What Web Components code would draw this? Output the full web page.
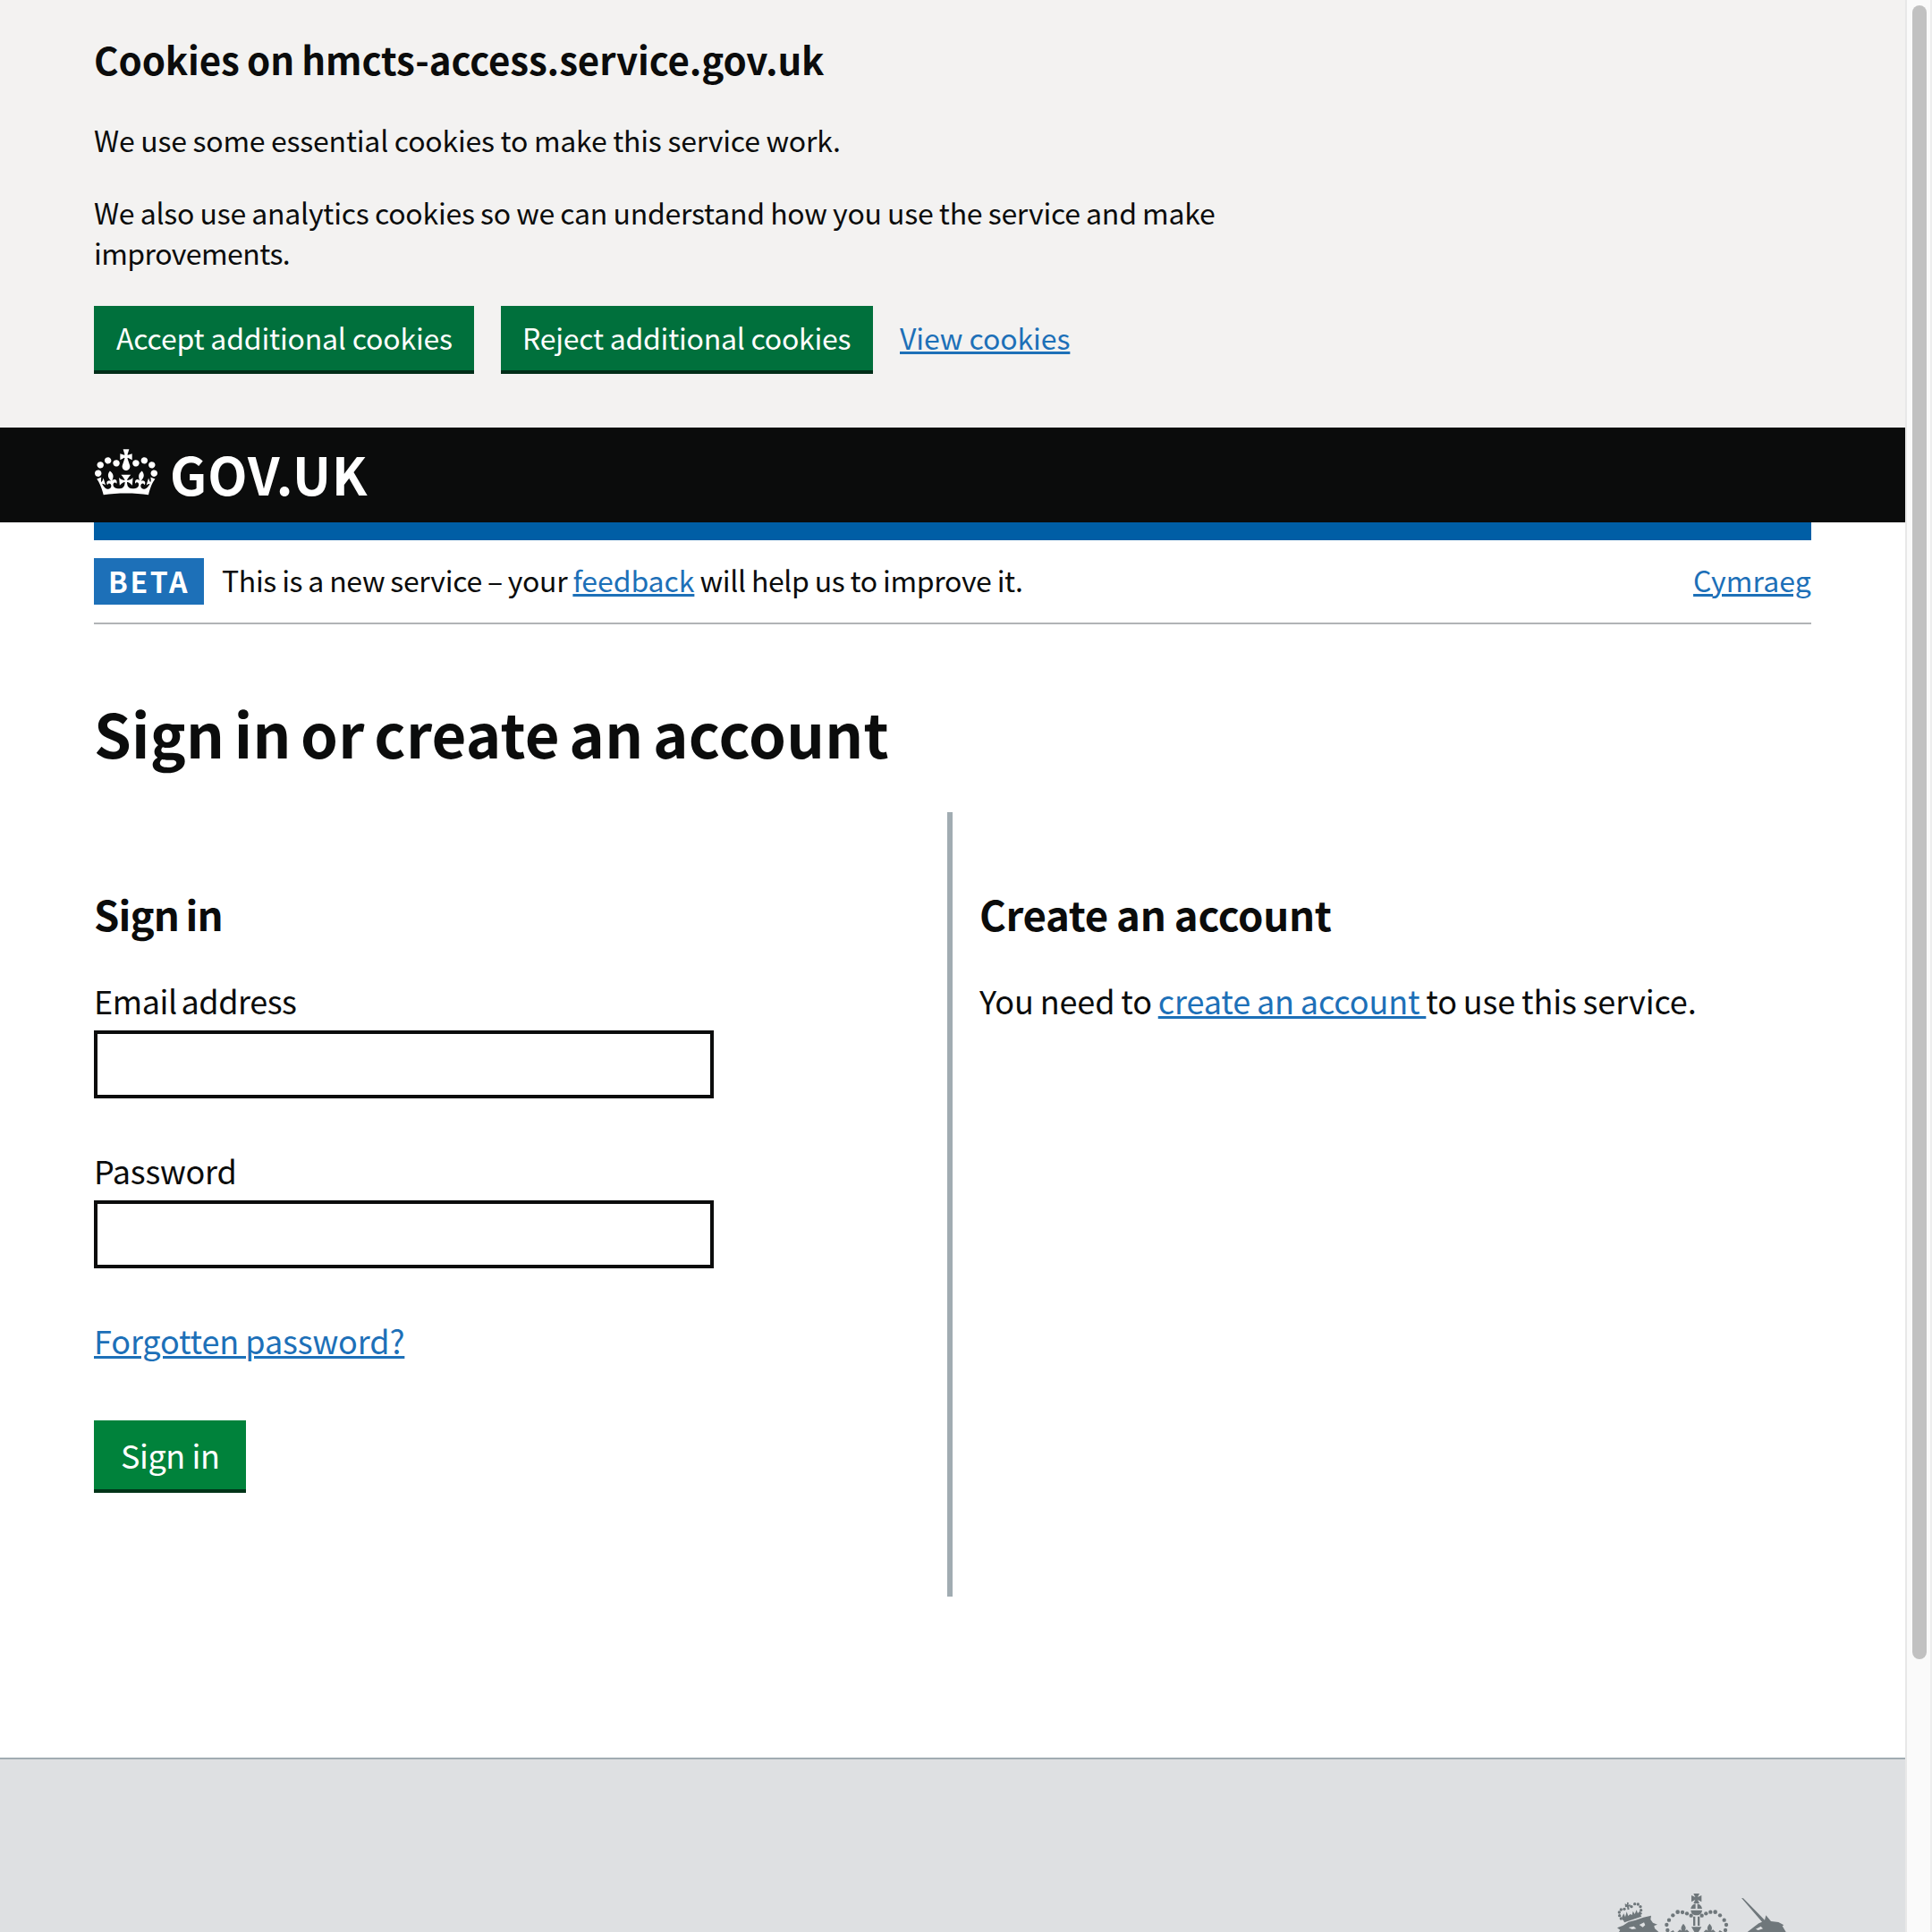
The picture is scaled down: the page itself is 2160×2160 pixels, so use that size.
<!DOCTYPE html>
<html lang="en">
<head>
<meta charset="utf-8">
<title>Sign in or create an account</title>
<style>
  html, body { margin: 0; height: 100%; overflow: hidden; background: #fff; }
  body { display: flex; font-family: "Noto Sans CJK JP", "Noto Sans", sans-serif; color: #0b0c0c; }
  main { margin: 0 105px; }
</style>
</head>
<body>
<app-page>
  <cookie-banner>
    <span slot="title">Cookies on hmcts-access.service.gov.uk</span>
    <cookie-text style="--ls:-.22px;--ws:-.15px">We use some essential cookies to make this service work.</cookie-text>
    <cookie-text>We also use analytics cookies so we can understand how you use the service and make <span style="letter-spacing:-.55px">improvements.</span></cookie-text>
    <gov-button slot="actions" style="--w:425px;--ls:-.2px">Accept additional cookies</gov-button>
    <gov-button slot="actions" style="--w:416px;--pad:24px;--ls:-.25px">Reject additional cookies</gov-button>
    <gov-link slot="actions" style="--ls:-.09px">View cookies</gov-link>
  </cookie-banner>
  <gov-header></gov-header>
  <main>
    <phase-banner tag="BETA">This is a new service – your <gov-link style="--ls:-.08px">feedback</gov-link> will help us to improve it.<gov-link slot="lang" style="--ls:.1px;--ws:0px">Cymraeg</gov-link></phase-banner>
    <page-title>Sign in or create an account</page-title>
    <split-columns>
      <form-column slot="left">
        <section-title slot="title" style="--ls:-.9px;--ws:-1.8px">Sign in</section-title>
        <text-field label="Email address" type="email" style="--ls:-.45px;--ws:-2.8px"></text-field>
        <text-field label="Password" type="password" style="--ls:-.25px"></text-field>
        <body-text style="--ls:-.13px;--ws:-.8px"><gov-link>Forgotten password?</gov-link></body-text>
        <gov-button large style="--w:170px;--ls:-.43px">Sign in</gov-button>
      </form-column>
      <form-column slot="right">
        <section-title slot="title" style="--ls:-.3px;--ws:-.8px">Create an account</section-title>
        <body-text style="--ls:-.11px;--ws:-1.1px">You need to <gov-link>create an account </gov-link>to use this service.</body-text>
      </form-column>
    </split-columns>
  </main>
  <gov-footer></gov-footer>
</app-page>
<scroll-rail></scroll-rail>
<script>
const define = (name, html) => customElements.define(name, class extends HTMLElement {
  constructor() {
    super();
    const t = document.createElement('template');
    t.innerHTML = html.replace(/\{(\w+)\}/g, (_, k) => this.getAttribute(k) || '');
    this.attachShadow({ mode: 'open' }).append(t.content.cloneNode(true));
  }
});

define('app-page', `<style>:host{display:flex;flex-direction:column;width:2130px;height:2160px;flex:none;overflow:hidden}</style><slot></slot>`);

define('scroll-rail', `<style>
:host{display:block;box-sizing:border-box;width:30px;height:2160px;flex:none;background:#fafafa;border-left:2px solid #e8e8e8;border-right:2px solid #ededed;padding:6px 4px 0 6px}
div{width:16px;height:1849px;border-radius:8px;background:#c1c1c1}
</style><div></div>`);

define('gov-link', `<style>
:host{display:inline;color:#1d70b8;letter-spacing:var(--ls,inherit);word-spacing:var(--ws,inherit)}
a{text-decoration:underline;text-decoration-thickness:3px;text-underline-offset:2px;cursor:pointer}
</style><a><slot></slot></a>`);

define('gov-button', `<style>
:host{display:block;flex:none}
button{box-sizing:border-box;width:var(--w);height:76px;margin:0;border:0;border-bottom:4px solid #002d18;border-radius:0;padding:13px 0 0 var(--pad,25px);background:#00703c;color:#fff;font:32px/45px "Noto Sans CJK JP",sans-serif;letter-spacing:var(--ls,0);text-align:left;white-space:nowrap;display:flex;align-items:flex-start}
:host([large]) button{height:81px;padding:15px 0 0 30px;background:#00823b;border-color:#003418;font-size:36px;line-height:46px}
</style><button><slot></slot></button>`);

define('cookie-text', `<style>:host{display:block;font-size:32px;line-height:45px;letter-spacing:var(--ls,-.24px);word-spacing:var(--ws,-.6px);max-width:1290px;margin-bottom:36px}</style><slot></slot>`);

define('cookie-banner', `<style>
:host{display:block;box-sizing:border-box;height:478px;background:#f3f2f1;padding:41px 105px 0;flex:none}
h2{margin:0 0 43px;font-size:42px;line-height:50px;letter-spacing:-.1px;word-spacing:-1.2px}
.actions{display:flex;gap:30px;padding-top:1px;font-size:32px;line-height:45px}
::slotted(gov-link){padding-top:13px}
</style><h2><slot name="title"></slot></h2><slot></slot><div class="actions"><slot name="actions"></slot></div>`);

define('gov-header', `<style>
:host{display:flex;box-sizing:border-box;height:106px;flex:none;background:#0b0c0c;color:#fff;padding:0 105px}
svg{display:block;width:70px;height:52px;margin:24px 14px 0 1px;fill:#fff}
span{font-size:57.5px;line-height:58px;font-weight:700;letter-spacing:1.07px;margin-top:22px}
</style>
<svg viewBox="0 0 132 97"><path d="M25 30.2c3.5 1.5 7.7-.2 9.1-3.7 1.5-3.6-.2-7.8-3.9-9.2-3.6-1.4-7.6.3-9.1 3.9-1.4 3.5.3 7.5 3.9 9zM9 39.5c3.6 1.5 7.8-.2 9.2-3.7 1.5-3.6-.2-7.8-3.9-9.1-3.6-1.5-7.6.2-9.1 3.8-1.4 3.5.3 7.5 3.8 9zM4.4 57.2c3.5 1.5 7.7-.2 9.1-3.8 1.5-3.6-.2-7.7-3.9-9.1-3.5-1.5-7.6.3-9.1 3.8-1.4 3.5.3 7.6 3.9 9.1zm38.3-21.4c3.5 1.5 7.7-.2 9.1-3.8 1.5-3.6-.2-7.7-3.9-9.1-3.6-1.5-7.6.3-9.1 3.8-1.3 3.6.4 7.7 3.9 9.1zm64.4-5.6c-3.6 1.5-7.8-.2-9.1-3.7-1.5-3.6.2-7.8 3.8-9.2 3.6-1.4 7.7.3 9.2 3.9 1.3 3.5-.4 7.5-3.9 9zm15.9 9.3c-3.6 1.5-7.7-.2-9.1-3.7-1.5-3.6.2-7.8 3.7-9.1 3.6-1.5 7.7.2 9.2 3.8 1.5 3.5-.3 7.5-3.8 9zm4.7 17.7c-3.6 1.5-7.8-.2-9.2-3.8-1.5-3.6.2-7.7 3.9-9.1 3.6-1.5 7.7.3 9.2 3.8 1.3 3.5-.4 7.6-3.9 9.1zM89.3 35.8c-3.6 1.5-7.8-.2-9.2-3.8-1.4-3.6.2-7.7 3.9-9.1 3.6-1.5 7.7.3 9.2 3.8 1.4 3.6-.3 7.7-3.9 9.1zM69.7 17.7l8.9 4.7V9.3l-8.9 2.8c-.2-.3-.5-.6-.9-.9L72.4 0H59.6l3.5 11.2c-.3.3-.6.5-.9.9l-8.8-2.8v13.1l8.8-4.7c.3.3.6.7.9.9l-5 15.4v.1c-.2.8-.4 1.6-.4 2.4 0 4.1 3.1 7.5 7 8.1h.2c.3 0 .7.1 1 .1.4 0 .7 0 1-.1h.2c4-.6 7.1-4.1 7.1-8.1 0-.8-.1-1.7-.4-2.4V34l-5.1-15.4c.4-.2.7-.6 1-.9zM66 92.8c16.9 0 32.8 1.1 47.1 3.2 4-16.9 8.9-26.7 14-33.5l-9.6-3.4c1 4.9 1.1 7.2 0 10.2-1.5-1.4-3-4.3-4.2-8.7L108.6 76c2.8-2 5-3.2 7.5-3.3-4.4 9.4-10 11.9-13.6 11.2-4.3-.8-6.3-4.6-5.6-7.9 1-4.7 5.7-5.9 8-.5 4.3-8.7-3-11.4-7.6-8.8 7.1-7.2 7.9-13.5 2.1-21.1-8 6.1-8.1 12.3-4.5 20.8-4.7-5.4-12.1-2.5-9.5 6.2 3.4-5.2 7.9-2 7.2 3.1-.6 4.3-6.4 7.8-13.5 7.2-10.3-.9-10.9-8-11.2-13.8 2.5-.5 7.1 1.8 11 7.3L80.2 60c-4.1 4.4-8 5.3-12.3 5.4 1.4-4.4 8-11.6 8-11.6H55.5s6.4 7.2 7.9 11.6c-4.2-.1-8-1-12.3-5.4l1.4 16.4c3.9-5.5 8.5-7.7 10.9-7.3-.3 5.8-.9 12.8-11.1 13.8-7.2.6-12.9-2.9-13.5-7.2-.7-5 3.8-8.3 7.1-3.1 2.7-8.7-4.6-11.6-9.4-6.2 3.7-8.5 3.6-14.7-4.6-20.8-5.8 7.6-5 13.9 2.2 21.1-4.7-2.6-11.9.1-7.7 8.8 2.3-5.5 7.1-4.2 8.1.5.7 3.3-1.3 7.1-5.7 7.9-3.5.7-9-1.8-13.5-11.2 2.5.1 4.7 1.3 7.5 3.3l-4.7-15.4c-1.2 4.4-2.7 7.2-4.3 8.7-1.1-3-.9-5.3 0-10.2l-9.5 3.4c5 6.9 9.9 16.7 14 33.5 14.8-2.1 30.8-3.2 47.7-3.2z"/></svg>
<span>GOV.UK</span>`);

define('phase-banner', `<style>
:host{display:flex;box-sizing:border-box;height:114px;border-top:20px solid #005ea5;border-bottom:2px solid #b1b4b6;padding:20px 0;font-size:32px;line-height:48px;letter-spacing:-.34px;word-spacing:-.7px}
strong{box-sizing:border-box;width:123px;height:52px;padding-left:16px;background:#1d70b8;color:#fff;line-height:50px;letter-spacing:2.66px;margin-right:20px}
p{margin:0;flex:1}
</style><strong>{tag}</strong><p><slot></slot></p><slot name="lang"></slot>`);

define('page-title', `<style>:host{display:block}h1{margin:86px 0 54px;font-size:67px;line-height:70px;letter-spacing:.28px;word-spacing:-5px}</style><h1><slot></slot></h1>`);

define('split-columns', `<style>
:host{display:flex;height:877px}
.l{width:954px;flex:none}
.r{flex:1;border-left:6px solid #a1acb2;padding-left:30px}
</style><div class="l"><slot name="left"></slot></div><div class="r"><slot name="right"></slot></div>`);

define('form-column', `<style>
:host{display:block;padding-top:88px}
.stack{display:flex;flex-direction:column;align-items:flex-start;gap:57px;margin-top:49px}
::slotted(gov-button){margin-top:10px}
</style><slot name="title"></slot><div class="stack"><slot></slot></div>`);

define('section-title', `<style>:host{display:block}h2{margin:0;font-size:45.5px;line-height:50px;letter-spacing:var(--ls);word-spacing:var(--ws)}</style><h2><slot></slot></h2>`);

define('body-text', `<style>:host{display:block}p{margin:0;font-size:36px;line-height:46px;letter-spacing:var(--ls);word-spacing:var(--ws)}</style><p><slot></slot></p>`);

define('text-field', `<style>
:host{display:block;width:693px}
label{display:block;font-size:36px;line-height:46px;letter-spacing:var(--ls);word-spacing:var(--ws);margin-bottom:11px}
input{display:block;box-sizing:border-box;width:100%;height:76px;border:4px solid #0b0c0c;border-radius:0;background:#fff;padding:10px;margin:0;font-size:36px}
</style><label for="f">{label}</label><input id="f" type="{type}">`);

define('gov-footer', `<style>
:host{display:flex;justify-content:flex-end;box-sizing:border-box;height:195px;flex:none;margin-top:180px;border-top:2px solid #a1acb2;background:#dee0e2;padding:113px 110px 0 0}
svg{display:block;width:240px;height:80px;fill:#6f777b}
</style>
<svg viewBox="0 0 720 240">
  <g id="lion">
    <path d="M103 196L160 178 166 188 108 208Z"/>
    <path d="M100 190L106 178 111 190 116 172 121 186 128 180 134 183 137 170 143 180 149 166 153 177 163 168 162 182 103 201Z"/>
    <path d="M110 145L117 148 117 140 123 142 121 149 128 148 129 156 123 154 125 164 119 166 117 156 111 157Z"/>
    <circle cx="97" cy="165" r="5"/><circle cx="91" cy="174" r="5"/><circle cx="92" cy="185" r="5"/><circle cx="97" cy="195" r="5"/><circle cx="108" cy="163" r="5"/>
    <circle cx="132" cy="155" r="5"/><circle cx="143" cy="146" r="5"/><circle cx="154" cy="147" r="5"/><circle cx="162" cy="155" r="5"/><circle cx="164" cy="167" r="5"/><circle cx="163" cy="178" r="4"/>
    <path fill-rule="evenodd" d="M84 226L104 218 122 206 146 200 172 191 198 185 196 198 204 209 219 215 208 219 210 228 223 240H90L94 233ZM122 225L140 221 148 229 134 231ZM158 216L174 208 178 217 170 224Z"/>
  </g>
  <g id="crown">
    <path d="M340 111H360L354 123 367 117V139L354 132 360 144H340L346 132 333 139V117L346 123Z"/>
    <path d="M331 162C333 150 341 146 347 145V162ZM353 145C360 147 367 151 369 162H353ZM331 167H369C368 178 361 184 350 184S332 178 331 167ZM339 188H346V219H339ZM354 188H361V219H354ZM333 223H367L357 240H343Z"/>
    <circle cx="253" cy="234" r="6.5"/><circle cx="250" cy="216" r="6.5"/><circle cx="258" cy="200" r="6.5"/><circle cx="271" cy="184" r="6.5"/><circle cx="287" cy="173" r="7"/><circle cx="303" cy="174" r="6.5"/><circle cx="318" cy="178" r="6.5"/><circle cx="332" cy="185" r="6.5"/>
    <circle cx="447" cy="234" r="6.5"/><circle cx="450" cy="216" r="6.5"/><circle cx="443" cy="200" r="6.5"/><circle cx="429" cy="184" r="6.5"/><circle cx="413" cy="173" r="7"/><circle cx="397" cy="173" r="6.5"/><circle cx="382" cy="178" r="6.5"/><circle cx="368" cy="185" r="6.5"/>
    <path d="M306 212C315 222 316 228 311 236L318 232 326 240H286L294 232 301 236C297 228 298 222 306 212ZM394 212C403 222 404 228 399 236L406 232 414 240H374L382 232 389 236C385 228 386 222 394 212ZM262 240L272 234 276 240ZM438 240L428 234 424 240Z"/>
  </g>
  <path id="unicorn" fill-rule="evenodd" d="M501 126L507 127 579 200 583 184 593 196 600 204 625 207 643 217 638 220 650 240H521L544 222 559 211 570 206ZM549 230L566 221 573 229 557 234Z"/>
</svg>`);
</script>
</body>
</html>
